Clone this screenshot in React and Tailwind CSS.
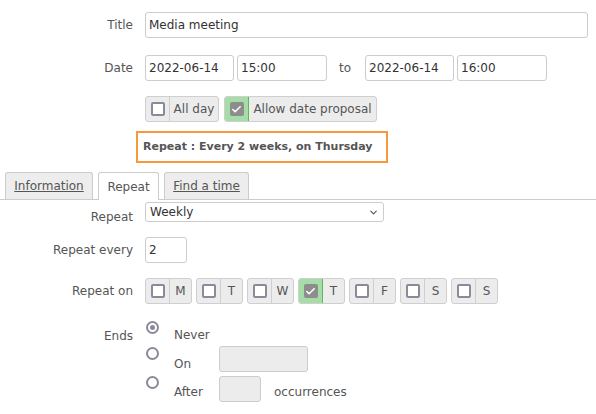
import { Check, ChevronDown } from 'lucide-react'

const font = { fontFamily: '"DejaVu Sans", sans-serif' }

const days = [
  { l: 'M' },
  { l: 'T' },
  { l: 'W' },
  { l: 'T', on: true },
  { l: 'F' },
  { l: 'S' },
  { l: 'S' },
]

function Box({ on }) {
  return on ? (
    <span className="w-[14px] h-[14px] rounded-[2px] bg-[#8d8d8d] flex items-center justify-center">
      <Check size={11} strokeWidth={3.5} className="text-white" />
    </span>
  ) : (
    <span className="w-[14px] h-[14px] rounded-[2px] border-2 border-[#8b8a9b] bg-white" />
  )
}

function CheckGroup({ on, label, w }) {
  return (
    <div className={`flex h-[26px] rounded-[3px] border border-[#cfcfcf] bg-[#ececec] overflow-hidden ${w}`}>
      <div className={`flex items-center justify-center border-r shrink-0 ${on ? 'bg-[#a6dca8] border-[#5cb85c] border-l border-y -ml-px -my-px h-[26px] w-[25px]' : 'w-[24px] border-[#cfcfcf]'}`}>
        <Box on={on} />
      </div>
      <div className="flex-1 flex items-center justify-center whitespace-nowrap text-[12px] text-[#555]">{label}</div>
    </div>
  )
}

function Label({ children, className = '' }) {
  return <div className={`w-[133px] text-right text-[12px] text-[#555] shrink-0 ${className}`}>{children}</div>
}

const input = 'h-[26px] rounded-[3px] border border-[#cccccc] bg-white px-[3px] text-[12px] text-[#333] flex items-center'

function Radio({ on }) {
  return (
    <span className="w-[13px] h-[13px] rounded-full border-2 border-[#8b8a9b] bg-white flex items-center justify-center">
      {on && <span className="w-[5px] h-[5px] rounded-full bg-[#8b8a9b]" />}
    </span>
  )
}

export default function App() {
  return (
    <div className="w-[596px] h-[414px] bg-white overflow-hidden" style={font}>
      <div className="flex items-center gap-[12px] mt-[12px]">
        <Label>Title</Label>
        <div className={`${input} w-[443px]`}>Media meeting</div>
      </div>

      <div className="flex items-center gap-[12px] mt-[17px]">
        <Label>Date</Label>
        <div className="flex items-center">
          <div className={`${input} w-[89px]`}>2022-06-14</div>
          <div className={`${input} w-[90px] ml-[3px]`}>15:00</div>
          <span className="text-[12px] text-[#555] ml-[12px] w-[26px]">to</span>
          <div className={`${input} w-[89px]`}>2022-06-14</div>
          <div className={`${input} w-[90px] ml-[3px]`}>16:00</div>
        </div>
      </div>

      <div className="flex gap-[5px] mt-[15px] ml-[145px]">
        <CheckGroup label="All day" w="w-[74px]" />
        <CheckGroup on label="Allow date proposal" w="w-[153px]" />
      </div>

      <div className="ml-[136px] mt-[9px] w-[252px] h-[32px] border-2 border-[#f7993a] flex items-center pl-[5px] whitespace-nowrap text-[11px] font-bold text-[#555]">
        Repeat : Every 2 weeks, on Thursday
      </div>

      <div className="mt-[9px] flex items-end gap-[5px] pl-[5px] border-b border-[#cccccc] h-[28px]">
        <div className="h-[27px] w-[88px] rounded-t-[3px] border border-b-0 border-[#cccccc] bg-[#ededed] flex items-center justify-center text-[12px] text-[#555] underline">Information</div>
        <div className="h-[28px] w-[61px] rounded-t-[3px] border border-b-0 border-[#cccccc] bg-white -mb-px flex items-center justify-center text-[12px] text-[#555]">Repeat</div>
        <div className="h-[27px] w-[85px] rounded-t-[3px] border border-b-0 border-[#cccccc] bg-[#ededed] flex items-center justify-center text-[12px] text-[#555] underline">Find a time</div>
      </div>

      <div className="flex items-end gap-[12px] mt-[2px]">
        <Label className="leading-[20px] translate-y-[5px]">Repeat</Label>
        <div className="h-[20px] w-[239px] rounded-[3px] border border-[#cccccc] bg-white px-[4px] text-[12px] text-[#333] flex items-center justify-between">
          <span>Weekly</span>
          <ChevronDown size={11} strokeWidth={2.5} className="text-[#555]" />
        </div>
      </div>

      <div className="flex items-center gap-[12px] mt-[15px]">
        <Label>Repeat every</Label>
        <div className={`${input} w-[42px]`}>2</div>
      </div>

      <div className="flex items-center gap-[12px] mt-[15px]">
        <Label>Repeat on</Label>
        <div className="flex gap-[4px]">
          {days.map((d, i) => (
            <CheckGroup key={i} on={d.on} label={d.l} w="w-[47px]" />
          ))}
        </div>
      </div>

      <div className="flex gap-[12px] mt-[17px]">
        <Label className="mt-[6px]">Ends</Label>
        <div className="text-[12px] text-[#555]">
          <div className="flex items-start h-[26px]">
            <span className="ml-[1px]"><Radio on /></span>
            <span className="ml-[15px] mt-[5px]">Never</span>
          </div>
          <div className="flex items-start h-[29px]">
            <span className="ml-[1px]"><Radio /></span>
            <span className="ml-[15px] mt-[8px] w-[45px]">On</span>
            <div className="h-[26px] w-[89px] rounded-[3px] border border-[#cccccc] bg-[#ececec] -mt-[1px]" />
          </div>
          <div className="flex items-start h-[28px]">
            <span className="ml-[1px]"><Radio /></span>
            <span className="ml-[15px] mt-[7px] w-[45px]">After</span>
            <div className="h-[26px] w-[42px] rounded-[3px] border border-[#cccccc] bg-[#ececec]" />
            <span className="ml-[13px] mt-[7px]">occurrences</span>
          </div>
        </div>
      </div>
    </div>
  )
}
